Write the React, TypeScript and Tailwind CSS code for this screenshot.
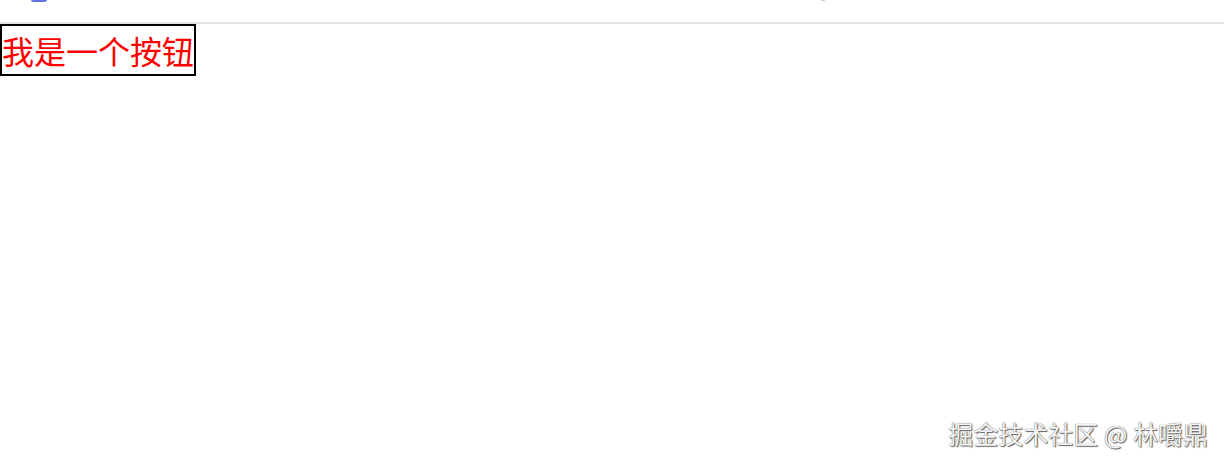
export default function App() {
  return (
    <div className="relative h-[462px] w-full overflow-hidden bg-white font-['Noto_Sans_CJK_SC',sans-serif]">
      <div className="relative h-[24px] border-b-2 border-[#e2e2e2]">
        <span className="absolute left-[31px] top-[-3px] h-[5px] w-[16px] rounded-sm bg-[#3b4fd8] opacity-80" />
        <span className="absolute left-[821px] top-[-2px] h-[3px] w-[4px] bg-[#bbbbbb] opacity-70" />
      </div>
      <button className="block border-2 border-black px-0 text-[32px] leading-[48px] text-[#ff0000]">
        我是一个按钮
      </button>
      <div className="absolute bottom-[16px] right-[16px] text-[25px] leading-none text-[#f4f4f4] [text-shadow:0_0_1px_#444,1px_1px_1px_#666]">
        掘金技术社区 @ 林嚼鼎
      </div>
    </div>
  );
}
